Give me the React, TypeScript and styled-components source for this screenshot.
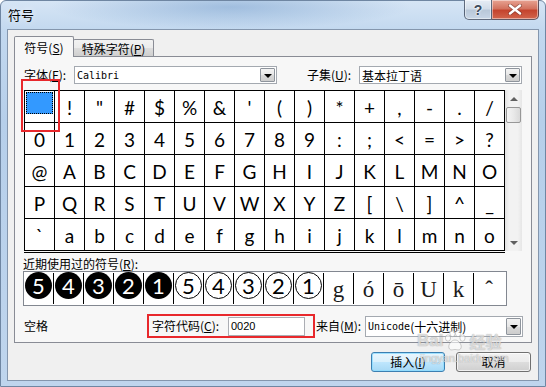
import React from 'react';
import styled, { createGlobalStyle } from 'styled-components';

const CJK = `"Noto Sans CJK SC", "Liberation Sans", sans-serif`;
const MONO = `"DejaVu Sans Mono", "Liberation Mono", "Noto Sans CJK SC", monospace`;

const GlobalStyle = createGlobalStyle`
  html, body {
    margin: 0;
    padding: 0;
    background: #fff;
  }
  body {
    width: 546px;
    height: 387px;
    overflow: hidden;
    font-family: ${CJK};
    font-size: 12px;
    color: #000;
  }
  * {
    box-sizing: border-box;
  }
`;

const Window = styled.div`
  position: relative;
  width: 546px;
  height: 387px;
  display: flex;
  flex-direction: column;
  padding: 0 6px 5px;
  border: 1px solid #6f86a2;
  border-radius: 6px 6px 0 0;
  background:
    radial-gradient(ellipse 180px 22px at 230px 6px, rgba(120, 160, 205, 0.55), rgba(120, 160, 205, 0) 100%),
    linear-gradient(180deg, #d6e5f5 0px, #c2d8ef 30px, #b6cfea 120px, #bfd5ed 100%);
`;

const TitleBar = styled.div`
  height: 28px;
  display: flex;
  align-items: flex-start;
`;

const TitleText = styled.div`
  margin: 5px 0 0 1px;
  font-size: 13px;
  line-height: 18px;
  color: #000;
  text-shadow: 0 0 6px rgba(255, 255, 255, 0.9);
`;

const CaptionButtons = styled.div`
  margin-left: auto;
  display: flex;
  margin-top: -1px;
`;

const CaptionButton = styled.div<{ $close?: boolean }>`
  width: ${p => (p.$close ? 47 : 28)}px;
  height: 20px;
  display: flex;
  align-items: center;
  justify-content: center;
  border: 1px solid rgba(52, 64, 86, 0.75);
  border-top: none;
  border-left: ${p => (p.$close ? 'none' : '1px solid rgba(52, 64, 86, 0.75)')};
  border-radius: ${p => (p.$close ? '0 0 5px 0' : '0 0 0 5px')};
  background: ${p =>
    p.$close
      ? 'linear-gradient(180deg, #e8a493 0%, #d3735f 45%, #c4442e 55%, #d2654c 100%)'
      : 'linear-gradient(180deg, #e6edf5 0%, #d3dde9 45%, #b9c8d9 55%, #c8d6e6 100%)'};
  box-shadow: inset 0 0 0 1px rgba(255, 255, 255, 0.45);
  font-family: "Liberation Sans", sans-serif;
  font-weight: bold;
  font-size: 14px;
  color: #3d4a5c;
  text-shadow: 0 0 2px #fff, 0 0 2px #fff;
`;

const Client = styled.div`
  flex: 1;
  display: flex;
  flex-direction: column;
  background: #f0f0f0;
  border: 1px solid #8496ad;
  padding: 6px 6px 0 6px;
`;

const TabStrip = styled.div`
  display: flex;
  align-items: flex-end;
  height: 20px;
  position: relative;
  z-index: 1;
`;

const Tab = styled.div<{ $active?: boolean }>`
  height: ${p => (p.$active ? 21 : 17)}px;
  width: ${p => (p.$active ? 60 : 81)}px;
  margin-bottom: ${p => (p.$active ? -1 : 0)}px;
  margin-left: ${p => (p.$active ? 0 : -1)}px;
  display: flex;
  align-items: center;
  justify-content: center;
  border: 1px solid #898c95;
  border-bottom: none;
  border-radius: 2px 2px 0 0;
  background: ${p => (p.$active ? '#f7f7f7' : 'linear-gradient(180deg, #f2f2f2 0%, #ebebeb 50%, #dddddd 51%, #cfcfcf 100%)')};
  font-size: 12px;
  line-height: 14px;
  padding-top: 1px;
  z-index: ${p => (p.$active ? 2 : 1)};
`;

const Acc = styled.span`
  text-decoration: underline;
`;

const Panel = styled.div`
  height: 287px;
  border: 1px solid #898c95;
  background: #f7f7f7;
  padding: 9px 9px 4px 9px;
  display: flex;
  flex-direction: column;
`;

const FontRow = styled.div`
  height: 18px;
  display: flex;
  align-items: center;
`;

const Label = styled.div<{ $w: number; $indent?: number }>`
  width: ${p => p.$w}px;
  flex-shrink: 0;
  padding-left: ${p => p.$indent ?? 0}px;
  font-size: 12px;
  line-height: 14px;
  white-space: nowrap;
`;

const Combo = styled.div<{ $w: number; $h: number }>`
  width: ${p => p.$w}px;
  height: ${p => p.$h}px;
  flex-shrink: 0;
  display: flex;
  align-items: stretch;
  border: 1px solid #a4a9b0;
  background: #fff;
  padding: 1px;
`;

const ComboText = styled.div<{ $mono?: boolean }>`
  flex: 1;
  display: flex;
  align-items: center;
  padding-left: 1px;
  font-family: ${p => (p.$mono ? MONO : CJK)};
  font-size: ${p => (p.$mono ? 10 : 12)}px;
  white-space: nowrap;
  overflow: hidden;
`;

const CjkPart = styled.span`
  font-family: ${CJK};
  font-size: 12px;
`;

const DropButton = styled.div`
  width: 15px;
  flex-shrink: 0;
  display: flex;
  align-items: center;
  justify-content: center;
  border: 1px solid #8e949c;
  border-radius: 1px;
  background: linear-gradient(180deg, #f3f3f3 0%, #e7e7e7 50%, #d9d9d9 51%, #cdcdcd 100%);

  &::after {
    content: '';
    border-left: 4px solid transparent;
    border-right: 4px solid transparent;
    border-top: 4px solid #000;
    margin-top: 1px;
  }
`;

const GridArea = styled.div`
  position: relative;
  margin-top: 6px;
  display: flex;
  align-items: flex-start;
`;

const GridWrap = styled.div`
  padding-bottom: 1px;
  border-bottom: 1px solid #000;
`;

const SymbolGrid = styled.div`
  display: grid;
  grid-template-columns: repeat(16, 30px);
  grid-auto-rows: 32px;
  border-top: 1px solid #000;
  border-left: 1px solid #000;
  background: #fff;
`;

const Cell = styled.div`
  border-right: 1px solid #000;
  border-bottom: 1px solid #000;
  display: flex;
  align-items: center;
  justify-content: center;
  font-family: Lato, "Open Sans", sans-serif;
  font-size: 19px;
  line-height: 31px;
  color: #000;
  padding-top: 1px;
`;

const SpaceCell = styled.div`
  border-right: 1px solid #000;
  border-bottom: 1px solid #000;
  padding: 1px 0 0 1px;
`;

const Highlight = styled.div`
  width: 27px;
  height: 22px;
  background: #3399ff;
  border: 1px dotted #000;
`;

const Annotation = styled.div`
  position: absolute;
  left: -3px;
  top: -11px;
  width: 39px;
  height: 53px;
  border: 2px solid #e8282c;
  pointer-events: none;
`;

const ScrollBar = styled.div`
  width: 17px;
  height: 161px;
  display: flex;
  flex-direction: column;
  background: linear-gradient(90deg, #e2e2e2 0%, #f2f2f2 25%, #f2f2f2 75%, #e6e6e6 100%);
`;

const ScrollArrow = styled.div<{ $down?: boolean }>`
  height: 17px;
  display: flex;
  align-items: center;
  justify-content: center;
  margin-top: ${p => (p.$down ? 'auto' : '0')};

  &::after {
    content: '';
    border-left: 4px solid transparent;
    border-right: 4px solid transparent;
    ${p => (p.$down ? 'border-top: 4px solid #606060;' : 'border-bottom: 4px solid #606060;')}
  }
`;

const Thumb = styled.div`
  height: 16px;
  margin: 0 1px;
  border: 1px solid #979797;
  border-radius: 2px;
  background: linear-gradient(90deg, #f4f4f4 0%, #e9e9e9 50%, #d9d9d9 100%);
`;

const RecentLabel = styled.div`
  margin-top: 3px;
  height: 15px;
  line-height: 15px;
  margin-left: -1px;
  font-size: 12px;
`;

const RecentBox = styled.div`
  width: 484px;
  height: 35px;
  margin-left: -1px;
  border: 1px solid #828790;
  background: #fff;
  padding: 1px 2px 1px 0;
  display: flex;
`;

const RecentCell = styled.div<{ $last?: boolean }>`
  width: 30px;
  height: 31px;
  flex-shrink: 0;
  border-right: ${p => (p.$last ? 'none' : '1px solid #000')};
  display: flex;
  align-items: flex-start;
  justify-content: center;
`;

const Circled = styled.div<{ $filled?: boolean }>`
  width: 27px;
  height: 27px;
  margin-top: -1px;
  border-radius: 50%;
  display: flex;
  align-items: center;
  justify-content: center;
  background: ${p => (p.$filled ? '#000' : '#fff')};
  border: ${p => (p.$filled ? 'none' : '1.5px solid #000')};
  color: ${p => (p.$filled ? '#fff' : '#000')};
  font-family: Lato, "Open Sans", sans-serif;
  font-size: 22px;
  line-height: 27px;
`;

const SerifGlyph = styled.div`
  font-family: "Liberation Serif", "DejaVu Serif", serif;
  font-size: 23px;
  line-height: 31px;
  color: #1a1a1a;
  padding-top: 1px;
`;

const BottomRow = styled.div`
  margin-top: 8px;
  height: 24px;
  display: flex;
  align-items: center;
`;

const HighlightGroup = styled.div`
  width: 168px;
  height: 24px;
  flex-shrink: 0;
  display: flex;
  align-items: center;
  padding-left: 3px;
  border: 2px solid #e8282c;
`;

const TextInput = styled.div`
  width: 77px;
  height: 19px;
  border: 1px solid #abadb3;
  background: #fff;
  padding-left: 2px;
  display: flex;
  align-items: center;
  font-family: "Liberation Sans", sans-serif;
  font-size: 11px;
`;

const ButtonRow = styled.div`
  margin-top: 9px;
  display: flex;
  justify-content: flex-end;
  gap: 11px;
  padding-right: 1px;
`;

const Button = styled.div<{ $default?: boolean; $w: number }>`
  width: ${p => p.$w}px;
  height: 20px;
  display: flex;
  align-items: center;
  justify-content: center;
  border: 1px solid ${p => (p.$default ? '#3c7fb1' : '#707070')};
  border-radius: 3px;
  background: ${p =>
    p.$default
      ? 'linear-gradient(180deg, #eaf6fd 0%, #d9f0fc 50%, #bee6fd 51%, #a7d9f5 100%)'
      : 'linear-gradient(180deg, #f2f2f2 0%, #ebebeb 50%, #dddddd 51%, #cfcfcf 100%)'};
  box-shadow: inset 0 0 0 1px ${p => (p.$default ? 'rgba(140, 220, 255, 0.8)' : 'rgba(255, 255, 255, 0.7)')};
  font-size: 12px;
  line-height: 14px;
`;

const Watermark = styled.div`
  position: absolute;
  left: 416px;
  top: 329px;
  display: flex;
  flex-direction: column;
  align-items: flex-start;
  pointer-events: none;
  color: rgba(255, 255, 255, 0.6);
  text-shadow: 0 0 1px rgba(120, 120, 120, 0.45), 0 0 1px rgba(120, 120, 120, 0.45);
`;

const MarkLine = styled.div`
  display: flex;
  align-items: center;
  font-family: "Liberation Sans", sans-serif;
  font-weight: bold;
  font-size: 17px;
  line-height: 22px;
`;

const MarkCjk = styled.span`
  font-family: ${CJK};
  font-size: 16px;
  margin-left: 2px;
`;

const MarkUrl = styled.div`
  font-family: "Liberation Sans", sans-serif;
  font-size: 11px;
  line-height: 12px;
  margin-left: 3px;
`;

const recent: { kind: 'filled' | 'ring' | 'serif'; ch: string }[] = [
  { kind: 'filled', ch: '5' },
  { kind: 'filled', ch: '4' },
  { kind: 'filled', ch: '3' },
  { kind: 'filled', ch: '2' },
  { kind: 'filled', ch: '1' },
  { kind: 'ring', ch: '5' },
  { kind: 'ring', ch: '4' },
  { kind: 'ring', ch: '3' },
  { kind: 'ring', ch: '2' },
  { kind: 'ring', ch: '1' },
  { kind: 'serif', ch: 'g' },
  { kind: 'serif', ch: 'ó' },
  { kind: 'serif', ch: 'ō' },
  { kind: 'serif', ch: 'U' },
  { kind: 'serif', ch: 'k' },
  { kind: 'serif', ch: 'ˆ' },
];

const symbols = Array.from({ length: 80 }, (_, i) => String.fromCharCode(0x20 + i));

const CloseIcon = () => (
  <svg width="14" height="11" viewBox="0 0 14 11">
    <path d="M2 1.5 L12 9.5 M12 1.5 L2 9.5" stroke="#5a2a22" strokeWidth="4" strokeLinecap="round" opacity="0.5" />
    <path d="M2 1.5 L12 9.5 M12 1.5 L2 9.5" stroke="#fff" strokeWidth="2.4" strokeLinecap="round" />
  </svg>
);

const Paw = () => (
  <svg width="24" height="22" viewBox="0 0 24 22" fill="rgba(255,255,255,0.6)" stroke="rgba(120,120,120,0.45)" strokeWidth="0.8">
    <ellipse cx="5" cy="8" rx="2.6" ry="3.2" />
    <ellipse cx="9.5" cy="3.5" rx="2.6" ry="3.2" />
    <ellipse cx="15" cy="3.5" rx="2.6" ry="3.2" />
    <ellipse cx="19.5" cy="8" rx="2.6" ry="3.2" />
    <path d="M12 10 C8 10 5 15 6 18 C7 21 10 19.5 12 19.5 C14 19.5 17 21 18 18 C19 15 16 10 12 10 Z" />
  </svg>
);

export default function App() {
  return (
    <>
      <GlobalStyle />
      <Window>
        <TitleBar>
          <TitleText>符号</TitleText>
          <CaptionButtons>
            <CaptionButton>?</CaptionButton>
            <CaptionButton $close>
              <CloseIcon />
            </CaptionButton>
          </CaptionButtons>
        </TitleBar>

        <Client>
          <TabStrip>
            <Tab $active>
              符号(<Acc>S</Acc>)
            </Tab>
            <Tab>
              特殊字符(<Acc>P</Acc>)
            </Tab>
          </TabStrip>

          <Panel>
            <FontRow>
              <Label $w={50}>
                字体(<Acc>F</Acc>):
              </Label>
              <Combo $w={203} $h={18}>
                <ComboText $mono>Calibri</ComboText>
                <DropButton />
              </Combo>
              <Label $w={82} $indent={30}>
                子集(<Acc>U</Acc>):
              </Label>
              <Combo $w={163} $h={18}>
                <ComboText>基本拉丁语</ComboText>
                <DropButton />
              </Combo>
            </FontRow>

            <GridArea>
              <GridWrap>
                <SymbolGrid>
                  {symbols.map((ch, i) =>
                    i === 0 ? (
                      <SpaceCell key={i}>
                        <Highlight />
                      </SpaceCell>
                    ) : (
                      <Cell key={i}>{ch}</Cell>
                    )
                  )}
                </SymbolGrid>
              </GridWrap>
              <ScrollBar>
                <ScrollArrow />
                <Thumb />
                <ScrollArrow $down />
              </ScrollBar>
              <Annotation />
            </GridArea>

            <RecentLabel>
              近期使用过的符号(<Acc>R</Acc>):
            </RecentLabel>
            <RecentBox>
              {recent.map((r, i) => (
                <RecentCell key={i} $last={i === recent.length - 1}>
                  {r.kind === 'serif' ? (
                    <SerifGlyph>{r.ch}</SerifGlyph>
                  ) : (
                    <Circled $filled={r.kind === 'filled'}>{r.ch}</Circled>
                  )}
                </RecentCell>
              ))}
            </RecentBox>

            <BottomRow>
              <Label $w={123}>空格</Label>
              <HighlightGroup>
                <Label $w={76}>
                  字符代码(<Acc>C</Acc>):
                </Label>
                <TextInput>0020</TextInput>
              </HighlightGroup>
              <Label $w={50} $indent={1}>
                来自(<Acc>M</Acc>):
              </Label>
              <Combo $w={158} $h={21}>
                <ComboText $mono>
                  Unicode<CjkPart>(十六进制)</CjkPart>
                </ComboText>
                <DropButton />
              </Combo>
            </BottomRow>
          </Panel>

          <ButtonRow>
            <Button $default $w={74}>
              插入(<Acc>I</Acc>)
            </Button>
            <Button $w={75}>取消</Button>
          </ButtonRow>
        </Client>

        <Watermark>
          <MarkLine>
            Bai
            <Paw />
            <MarkCjk>经验</MarkCjk>
          </MarkLine>
          <MarkUrl>jingyan.baidu.com</MarkUrl>
        </Watermark>
      </Window>
    </>
  );
}
